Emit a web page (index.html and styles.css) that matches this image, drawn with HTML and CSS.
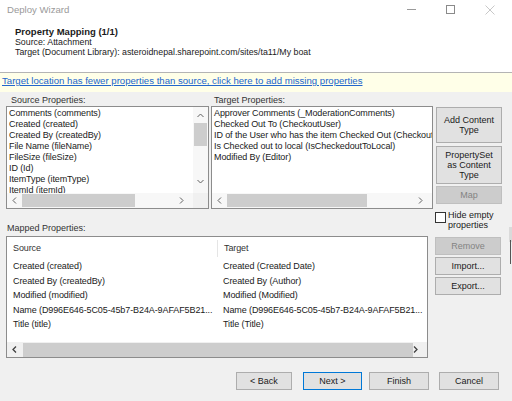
FILE: index.html
```html
<!DOCTYPE html>
<html lang="en">
<head>
    <meta charset="UTF-8">
    <meta name="viewport" content="width=device-width, initial-scale=1.0">
    <title>Deploy Wizard</title>
    <link rel="stylesheet" href="styles.css">
</head>
<body>
    <div id="dialog">
        <div class="titlebar">
            <span class="caption">Deploy Wizard</span>
            <div class="controls">
                <span class="ctl"><svg width="10" height="10"><line x1="0" y1="4.5" x2="9" y2="4.5" stroke="#9a9a9a"/></svg></span>
                <span class="ctl"><svg width="10" height="10"><rect x="0.5" y="0.5" width="8" height="8" fill="none" stroke="#8a8a8a"/></svg></span>
                <span class="ctl"><svg width="10" height="10"><path d="M0.5 0.5 L9.5 9.5 M9.5 0.5 L0.5 9.5" stroke="#c8c8c8"/></svg></span>
            </div>
        </div>

        <div class="header">
            <div class="heading">Property Mapping (1/1)</div>
            <div>Source: Attachment</div>
            <div>Target (Document Library): asteroidnepal.sharepoint.com/sites/ta11/My boat</div>
        </div>

        <div class="notice">
            <a href="javascript:;">Target location has fewer properties than source, click here to add missing properties</a>
        </div>

        <div class="content">
            <div class="top">
                <div class="pane source">
                    <div class="label">Source Properties:</div>
                    <div class="listbox with-v">
                        <div class="items">
                            <div>Comments (comments)</div>
                            <div>Created (created)</div>
                            <div>Created By (createdBy)</div>
                            <div>File Name (fileName)</div>
                            <div>FileSize (fileSize)</div>
                            <div>ID (Id)</div>
                            <div>ItemType (itemType)</div>
                            <div>ItemId (itemId)</div>
                        </div>
                        <div class="vscroll">
                            <svg width="7" height="5"><polyline points="0.5,4 3.5,1 6.5,4" fill="none" stroke="#606060"/></svg>
                            <div class="vthumb"></div>
                            <svg width="7" height="5" class="down"><polyline points="0.5,1 3.5,4 6.5,1" fill="none" stroke="#606060"/></svg>
                        </div>
                        <div class="hscroll">
                            <svg width="5" height="7"><polyline points="4,0.5 1,3.5 4,6.5" fill="none" stroke="#606060"/></svg>
                            <div class="hthumb" style="width: 113px"></div>
                            <svg width="5" height="7" class="right"><polyline points="1,0.5 4,3.5 1,6.5" fill="none" stroke="#606060"/></svg>
                        </div>
                        <div class="corner"></div>
                    </div>
                </div>

                <div class="pane target">
                    <div class="label">Target Properties:</div>
                    <div class="listbox">
                        <div class="items">
                            <div>Approver Comments (_ModerationComments)</div>
                            <div>Checked Out To (CheckoutUser)</div>
                            <div>ID of the User who has the item Checked Out (CheckoutUserId)</div>
                            <div>Is Checked out to local (IsCheckedoutToLocal)</div>
                            <div>Modified By (Editor)</div>
                        </div>
                        <div class="hscroll">
                            <svg width="5" height="7"><polyline points="4,0.5 1,3.5 4,6.5" fill="none" stroke="#606060"/></svg>
                            <div class="hthumb" style="width: 140px"></div>
                            <svg width="5" height="7" class="right"><polyline points="1,0.5 4,3.5 1,6.5" fill="none" stroke="#606060"/></svg>
                        </div>
                    </div>
                </div>

                <div class="side">
                    <button class="btn tall">Add Content<br>Type</button>
                    <button class="btn taller">PropertySet<br>as Content<br>Type</button>
                    <button class="btn off">Map</button>
                    <label class="check">
                        <span class="box"></span>
                        <span>Hide empty<br>properties</span>
                    </label>
                </div>
            </div>

            <div class="bottom">
                <div class="mapped">
                    <div class="label">Mapped Properties:</div>
                    <div class="listview">
                        <div class="cols head">
                            <span>Source</span>
                            <span class="sep">Target</span>
                        </div>
                        <div class="rows">
                            <div class="cols"><span>Created (created)</span><span>Created (Created Date)</span></div>
                            <div class="cols"><span>Created By (createdBy)</span><span>Created By (Author)</span></div>
                            <div class="cols"><span>Modified (modified)</span><span>Modified (Modified)</span></div>
                            <div class="cols"><span>Name (D996E646-5C05-45b7-B24A-9AFAF5B21...</span><span>Name (D996E646-5C05-45b7-B24A-9AFAF5B21...</span></div>
                            <div class="cols"><span>Title (title)</span><span>Title (Title)</span></div>
                        </div>
                        <div class="hscroll">
                            <svg width="5" height="7"><polyline points="4,0.5 1,3.5 4,6.5" fill="none" stroke="#404040" stroke-width="1.3"/></svg>
                            <div class="hthumb" style="width: 392px"></div>
                            <svg width="5" height="7" class="right"><polyline points="1,0.5 4,3.5 1,6.5" fill="none" stroke="#404040" stroke-width="1.3"/></svg>
                        </div>
                    </div>
                </div>

                <div class="side actions">
                    <button class="btn off">Remove</button>
                    <button class="btn">Import...</button>
                    <button class="btn">Export...</button>
                </div>
            </div>

            <div class="footer">
                <button class="btn nav back">&lt; Back</button>
                <button class="btn nav next">Next &gt;</button>
                <button class="btn nav finish">Finish</button>
                <button class="btn nav cancel">Cancel</button>
            </div>
        </div>

        <!-- edge of the window behind -->
        <div class="behind"></div>
        <div class="behind-line"></div>
    </div>
</body>
</html>
```

FILE: styles.css
```css
* {
    box-sizing: border-box;
}

body {
    margin: 0;
    width: 512px;
    height: 401px;
    overflow: hidden;
    background: #f0f0f0;
    font-family: "Liberation Sans", Arial, sans-serif;
    font-size: 9px;
    color: #1a1a1a;
}

#dialog {
    position: relative;
    width: 512px;
    height: 401px;
}

/* window caption */
.titlebar {
    display: flex;
    align-items: center;
    height: 18px;
    background: #fff;
}

.caption {
    padding-left: 7px;
    font-size: 9.6px;
    color: #9a9a9a;
}

.controls {
    display: flex;
    margin-left: auto;
    margin-right: 3px;
}

.ctl {
    display: flex;
    justify-content: center;
    width: 39px;
    padding-top: 1px;
}

/* page header */
.header {
    height: 54px;
    padding: 9px 0 0 15px;
    background: #fff;
    line-height: 10px;
    font-size: 8.8px;
}

.heading {
    font-weight: bold;
    font-size: 9.5px;
}

.notice {
    height: 20px;
    padding: 1px 0 0 2px;
    border-top: 1px solid #b4b4b4;
    background: #ffffe8;
    line-height: 14px;
    font-size: 9.6px;
}

.notice a {
    color: #2266cc;
}

.content {
    padding: 2px 0 0 6px;
}

.label {
    height: 12px;
    line-height: 12px;
    padding-left: 5px;
    color: #333;
}

/* source / target lists */
.top {
    display: flex;
    height: 115px;
}

.source {
    width: 203px;
}

.target {
    width: 222px;
    margin-left: 2px;
}

.target .label {
    padding-left: 3px;
}

.listbox {
    display: grid;
    grid-template-columns: 1fr;
    grid-template-rows: 1fr 15px;
    height: 103px;
    border: 1px solid #8c8c8c;
    background: #fff;
}

.listbox.with-v {
    grid-template-columns: 1fr 15px;
}

.items {
    overflow: hidden;
    padding: 1px 0 0 2px;
    line-height: 11px;
    white-space: nowrap;
    letter-spacing: -0.1px;
}

.vscroll {
    display: flex;
    flex-direction: column;
    align-items: center;
    padding-top: 6px;
    background: #f7f7f7;
}

.vthumb {
    width: 13px;
    height: 23px;
    margin-top: 5px;
    background: #cdcdcd;
}

.vscroll .down {
    margin-top: auto;
    margin-bottom: 9px;
}

.hscroll {
    display: flex;
    align-items: center;
    grid-column: 1;
    padding: 0 0 0 5px;
    background: #f7f7f7;
}

.hthumb {
    height: 13px;
    margin-left: 5px;
    background: #cdcdcd;
}

.hscroll .right {
    margin-left: auto;
    margin-right: 9px;
}

.corner {
    background: #f0f0f0;
}

/* right hand buttons */
.side {
    display: flex;
    flex-direction: column;
    width: 66px;
    margin-left: 3px;
    padding-top: 13px;
}

.side > * {
    flex: none;
}

.btn {
    display: block;
    height: 18px;
    padding: 0;
    border: 1px solid #adadad;
    background: #e1e1e1;
    font-family: inherit;
    font-size: 9px;
    line-height: 10px;
    color: #1a1a1a;
    text-align: center;
}

.side .btn + .btn {
    margin-top: 2px;
}

.btn.tall {
    height: 36px;
}

.side .btn.taller {
    height: 38px;
    margin-top: 3px;
}

.btn.off {
    border-color: #bfbfbf;
    background: #cccccc;
    color: #838383;
}

.check {
    display: flex;
    align-items: flex-start;
    margin-top: 6px;
    line-height: 10px;
}

.box {
    flex: none;
    width: 11px;
    height: 11px;
    margin: 2px 2px 0 -1px;
    border: 1px solid #333;
    background: #fff;
}

/* mapped properties */
.bottom {
    display: flex;
    margin-top: 13px;
}

.mapped {
    width: 422px;
}

.mapped .label {
    padding-left: 1px;
}

.listview {
    display: flex;
    flex-direction: column;
    height: 122px;
    margin-top: 2px;
    border: 1px solid #8c8c8c;
    background: #fff;
}

.cols {
    display: flex;
    white-space: nowrap;
    letter-spacing: -0.1px;
}

.cols span {
    width: 212px;
    padding-left: 6px;
    overflow: hidden;
}

.head {
    height: 22px;
    align-items: center;
    color: #333;
}

.head .sep {
    height: 17px;
    line-height: 17px;
    border-left: 1px solid #e5e5e5;
}

.rows {
    flex: 1;
    line-height: 14.5px;
}

.listview .hscroll {
    height: 15px;
    background: #f0f0f0;
}

.listview .hthumb {
    margin-left: 6px;
    height: 14px;
}

.actions {
    margin-left: 7px;
    padding-top: 15px;
}

/* wizard navigation */
.footer {
    display: flex;
    margin-top: 14px;
}

.nav {
    height: 18px;
}

.back {
    width: 56px;
    margin-left: 230px;
}

.next {
    width: 59px;
    margin-left: 11px;
    border-color: #0078d7;
}

.finish {
    width: 60px;
    margin-left: 7px;
}

.cancel {
    width: 60px;
    margin-left: 10px;
}

.behind {
    position: absolute;
    left: 509px;
    top: 227px;
    width: 3px;
    height: 15px;
    background: #dadada;
}

.behind-line {
    position: absolute;
    left: 510px;
    top: 240px;
    width: 1px;
    height: 24px;
    background: #555;
}
```
